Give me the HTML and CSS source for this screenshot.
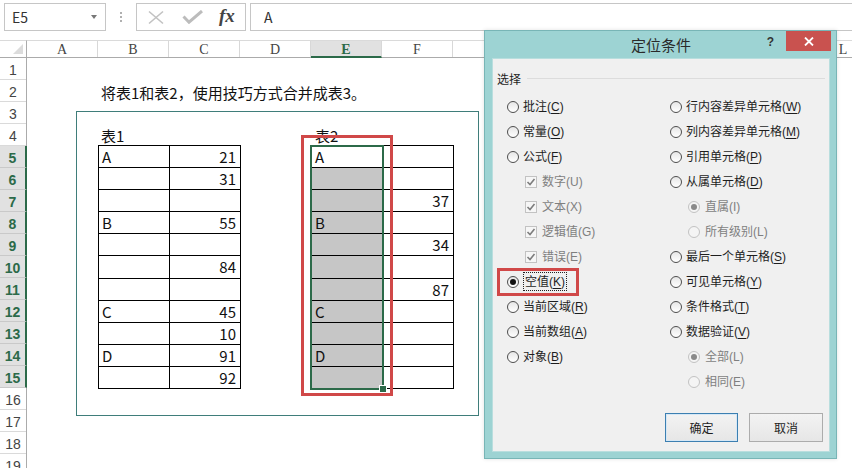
FILE: index.html
```html
<!DOCTYPE html>
<html lang="zh-CN">
<head>
    <meta charset="UTF-8">
    <title>定位条件</title>
    <link rel="stylesheet" href="styles.css">
</head>
<body>
    <!-- Formula bar -->
    <div class="formula-bar">
        <div class="name-box">E5<span class="arrow"></span></div>
        <div class="grip"><i></i><i></i><i></i></div>
        <div class="fx-box">
            <svg class="ico-x" width="18" height="15" viewBox="0 0 18 15"><path d="M2 1.5 L16 13.5 M16 1.5 L2 13.5" stroke="#c2c2c2" stroke-width="1.6" fill="none"/></svg>
            <svg class="ico-ok" width="22" height="14" viewBox="0 0 22 14"><path d="M1.5 6.5 L7 12.2 L20 1" stroke="#bcbcbc" stroke-width="3" fill="none"/></svg>
            <span class="fx">fx</span>
        </div>
        <div class="formula-input">A</div>
    </div>

    <!-- Sheet -->
    <div class="sheet">
        <div class="corner"><span></span></div>
        <div class="col-heads">
            <div>A</div><div>B</div><div>C</div><div>D</div><div class="active">E</div><div>F</div>
            <!-- G to K sit under the dialog -->
            <div></div><div></div><div></div><div></div><div></div><div>L</div>
        </div>
        <div class="row-heads">
            <div>1</div><div>2</div><div>3</div><div>4</div>
            <div class="active">5</div><div class="active">6</div><div class="active">7</div><div class="active">8</div>
            <div class="active">9</div><div class="active">10</div><div class="active">11</div><div class="active">12</div>
            <div class="active">13</div><div class="active">14</div><div class="active">15</div>
            <div>16</div><div>17</div><div>18</div><div>19</div>
        </div>
        <div class="cells">
            <div class="note">将表1和表2，使用技巧方式合并成表3。</div>
            <div class="label t1-label">表1</div>
            <div class="label t2-label">表2</div>

            <div class="tbl tbl1">
                <div>A</div><div class="num">21</div>
                <div></div><div class="num">31</div>
                <div></div><div></div>
                <div>B</div><div class="num">55</div>
                <div></div><div></div>
                <div></div><div class="num">84</div>
                <div></div><div></div>
                <div>C</div><div class="num">45</div>
                <div></div><div class="num">10</div>
                <div>D</div><div class="num">91</div>
                <div></div><div class="num">92</div>
            </div>

            <div class="tbl tbl2">
                <div>A</div><div></div>
                <div class="sel"></div><div></div>
                <div class="sel"></div><div class="num">37</div>
                <div class="sel">B</div><div></div>
                <div class="sel"></div><div class="num">34</div>
                <div class="sel"></div><div></div>
                <div class="sel"></div><div class="num">87</div>
                <div class="sel">C</div><div></div>
                <div class="sel"></div><div></div>
                <div class="sel">D</div><div></div>
                <div class="sel"></div><div></div>
            </div>

            <div class="frame"></div>
            <div class="selection"></div>
            <div class="fill-handle"></div>
            <div class="mark mark-col"></div>
        </div>
    </div>

    <!-- Go To Special dialog -->
    <div class="dialog">
        <div class="title-bar">
            <span class="title">定位条件</span>
            <span class="help">?</span>
            <span class="close"><svg width="10" height="9" viewBox="0 0 10 9"><path d="M1 0.5 L9 8.5 M9 0.5 L1 8.5" stroke="#fff" stroke-width="1.8"/></svg></span>
        </div>
        <div class="content">
            <div class="group-head"><span>选择</span><i></i></div>
            <div class="options">
                <div class="opt"><span class="radio"></span><span>批注<span class="key">(<u>C</u>)</span></span></div>
                <div class="opt"><span class="radio"></span><span>行内容差异单元格<span class="key">(<u>W</u>)</span></span></div>

                <div class="opt"><span class="radio"></span><span>常量<span class="key">(<u>O</u>)</span></span></div>
                <div class="opt"><span class="radio"></span><span>列内容差异单元格<span class="key">(<u>M</u>)</span></span></div>

                <div class="opt"><span class="radio"></span><span>公式<span class="key">(<u>F</u>)</span></span></div>
                <div class="opt"><span class="radio"></span><span>引用单元格<span class="key">(<u>P</u>)</span></span></div>

                <div class="opt sub off"><span class="check"><svg width="10" height="10" viewBox="0 0 10 10"><path d="M1.5 5 L4 7.5 L8.5 2" stroke="#7d7d7d" stroke-width="1.6" fill="none"/></svg></span><span>数字<span class="key">(U)</span></span></div>
                <div class="opt"><span class="radio"></span><span>从属单元格<span class="key">(<u>D</u>)</span></span></div>

                <div class="opt sub off"><span class="check"><svg width="10" height="10" viewBox="0 0 10 10"><path d="M1.5 5 L4 7.5 L8.5 2" stroke="#7d7d7d" stroke-width="1.6" fill="none"/></svg></span><span>文本<span class="key">(X)</span></span></div>
                <div class="opt sub off"><span class="radio on"></span><span>直属<span class="key">(I)</span></span></div>

                <div class="opt sub off"><span class="check"><svg width="10" height="10" viewBox="0 0 10 10"><path d="M1.5 5 L4 7.5 L8.5 2" stroke="#7d7d7d" stroke-width="1.6" fill="none"/></svg></span><span>逻辑值<span class="key">(G)</span></span></div>
                <div class="opt sub off"><span class="radio"></span><span>所有级别<span class="key">(L)</span></span></div>

                <div class="opt sub off"><span class="check"><svg width="10" height="10" viewBox="0 0 10 10"><path d="M1.5 5 L4 7.5 L8.5 2" stroke="#7d7d7d" stroke-width="1.6" fill="none"/></svg></span><span>错误<span class="key">(E)</span></span></div>
                <div class="opt"><span class="radio"></span><span>最后一个单元格<span class="key">(<u>S</u>)</span></span></div>

                <div class="opt"><span class="radio on"></span><span class="focus">空值<span class="key">(<u>K</u>)</span></span></div>
                <div class="opt"><span class="radio"></span><span>可见单元格<span class="key">(<u>Y</u>)</span></span></div>

                <div class="opt"><span class="radio"></span><span>当前区域<span class="key">(<u>R</u>)</span></span></div>
                <div class="opt"><span class="radio"></span><span>条件格式<span class="key">(<u>T</u>)</span></span></div>

                <div class="opt"><span class="radio"></span><span>当前数组<span class="key">(<u>A</u>)</span></span></div>
                <div class="opt"><span class="radio"></span><span>数据验证<span class="key">(<u>V</u>)</span></span></div>

                <div class="opt"><span class="radio"></span><span>对象<span class="key">(<u>B</u>)</span></span></div>
                <div class="opt sub off"><span class="radio on"></span><span>全部<span class="key">(L)</span></span></div>

                <div class="opt"></div>
                <div class="opt sub off"><span class="radio"></span><span>相同<span class="key">(E)</span></span></div>
            </div>
            <div class="buttons">
                <button class="default">确定</button>
                <button>取消</button>
            </div>
            <div class="mark mark-opt"></div>
        </div>
    </div>
</body>
</html>
```

FILE: styles.css
```css
body {
    margin: 0;
    width: 852px;
    height: 468px;
    overflow: hidden;
    position: relative;
    background: #fff;
    font-family: "Noto Sans CJK SC", "Liberation Sans", sans-serif;
    color: #222;
}

/* formula bar */
.formula-bar {
    height: 40px;
    display: flex;
    align-items: flex-start;
    padding-top: 3px;
    box-sizing: border-box;
}
.name-box {
    margin-left: 4px;
    width: 102px;
    height: 28px;
    box-sizing: border-box;
    border: 1px solid #c6c6c6;
    padding-left: 7px;
    font-size: 14px;
    line-height: 26px;
    color: #333;
    position: relative;
}
.name-box .arrow {
    position: absolute;
    right: 8px;
    top: 11px;
    border-left: 3.5px solid transparent;
    border-right: 3.5px solid transparent;
    border-top: 4px solid #777;
}
.grip {
    width: 30px;
    height: 28px;
    display: flex;
    flex-direction: column;
    align-items: center;
    justify-content: center;
    gap: 2px;
}
.grip i {
    width: 2px;
    height: 2px;
    background: #b0b0b0;
}
.fx-box {
    width: 110px;
    height: 28px;
    box-sizing: border-box;
    border: 1px solid #c6c6c6;
    display: flex;
    align-items: center;
    padding-left: 10px;
}
.ico-x { margin-right: 17px; }
.ico-ok { margin-right: 15px; }
.fx {
    font-family: "Liberation Serif", serif;
    font-style: italic;
    font-weight: bold;
    font-size: 19px;
    color: #444;
    line-height: 20px;
    margin-top: -2px;
}
.formula-input {
    flex: 1;
    margin-left: 4px;
    height: 28px;
    box-sizing: border-box;
    border: 1px solid #c6c6c6;
    border-right: none;
    padding-left: 13px;
    font-size: 14px;
    line-height: 26px;
    color: #333;
}

/* sheet */
.sheet {
    display: grid;
    grid-template-columns: 27px 1fr;
    grid-template-rows: 18px 1fr;
}
.corner {
    border-right: 1px solid #ababab;
    border-bottom: 1px solid #ababab;
    border-top: 1px solid #dadada;
    box-sizing: border-box;
    position: relative;
}
.corner span {
    position: absolute;
    right: 3px;
    bottom: 3px;
    border-left: 10px solid transparent;
    border-bottom: 10px solid #dcdcdc;
}
.col-heads {
    display: flex;
    border-top: 1px solid #dadada;
    border-bottom: 1px solid #ababab;
    box-sizing: border-box;
}
.col-heads div {
    flex: none;
    width: 71px;
    box-sizing: border-box;
    border-right: 1px solid #d8d8d8;
    text-align: center;
    font-family: "Liberation Serif", serif;
    font-size: 14px;
    line-height: 18px;
    color: #444;
}
.col-heads div.active {
    background: #e1e1e1;
    color: #2c6a49;
    font-weight: bold;
    border-bottom: 2px solid #2c6a49;
    margin-bottom: -1px;
}
.row-heads {
    display: flex;
    flex-direction: column;
    border-right: 1px solid #ababab;
}
.row-heads div {
    flex: none;
    height: 22px;
    box-sizing: border-box;
    border-bottom: 1px solid #dadada;
    display: flex;
    align-items: flex-end;
    justify-content: center;
    font-family: "Liberation Sans", sans-serif;
    font-size: 14px;
    line-height: 18px;
    color: #444;
}
.row-heads div.active {
    background: #e1e1e1;
    color: #2c6a49;
    font-weight: bold;
    border-bottom-color: #c9c9c9;
    border-right: 2px solid #2c6a49;
    margin-right: -1px;
}

.cells {
    display: grid;
    grid-template-columns: repeat(12, 71px);
    grid-template-rows: repeat(19, 22px);
    position: relative;
    font-size: 15px;
    color: #111;
}
.note {
    grid-column: 2 / span 6;
    grid-row: 2;
    white-space: nowrap;
    padding: 3px 0 0 3px;
    line-height: 20px;
}
.label {
    grid-row: 4;
    padding: 2px 0 0 3px;
    line-height: 20px;
}
.t1-label { grid-column: 2; }
.t2-label { grid-column: 5; padding-left: 4px; }

.tbl {
    grid-row: 5 / span 11;
    display: grid;
    grid-template-columns: 1fr 1fr;
    grid-template-rows: repeat(11, 1fr);
    border-left: 1px solid #000;
    border-top: 1px solid #000;
    margin: -1px -1px -1px 0;
}
.tbl1 { grid-column: 2 / span 2; }
.tbl2 { grid-column: 5 / span 2; }
.tbl div {
    border-right: 1px solid #000;
    border-bottom: 1px solid #000;
    padding: 1px 0 0 3px;
    line-height: 20px;
}
.tbl div.num {
    text-align: right;
    padding-right: 4px;
}
.tbl div.sel {
    background: #c6c6c6;
}

/* overlays on the sheet */
.frame {
    position: absolute;
    left: 49px;
    top: 53px;
    width: 403px;
    height: 305px;
    box-sizing: border-box;
    border: 1px solid #3f7d7a;
    pointer-events: none;
}
.selection {
    position: absolute;
    left: 283px;
    top: 87px;
    width: 74px;
    height: 245px;
    box-sizing: border-box;
    border: 2px solid #2c6a49;
}
.fill-handle {
    position: absolute;
    left: 352px;
    top: 327px;
    width: 6px;
    height: 6px;
    background: #2c6a49;
    border: 1px solid #fff;
}
.mark {
    position: absolute;
    box-sizing: border-box;
    border: 3px solid #d04848;
}
.mark-col {
    left: 274px;
    top: 77px;
    width: 92px;
    height: 261px;
}

/* dialog */
.dialog {
    position: absolute;
    left: 484px;
    top: 30px;
    width: 353px;
    height: 429px;
    box-sizing: border-box;
    background: #9dd3d3;
    border: 1px solid #78b5b6;
    padding: 0 6px 6px 7px;
    display: flex;
    flex-direction: column;
    box-shadow: 0 0 4px rgba(0, 0, 0, 0.12);
}
.title-bar {
    height: 27px;
    flex: none;
    display: flex;
    align-items: center;
    justify-content: center;
    font-size: 15px;
    color: #2a2a2a;
    position: relative;
}
.help {
    position: absolute;
    right: 56px;
    top: 4px;
    font-family: "Liberation Sans", sans-serif;
    font-weight: bold;
    font-size: 12px;
    line-height: 14px;
    color: #333;
}
.close {
    position: absolute;
    right: -1px;
    top: 0;
    width: 45px;
    height: 20px;
    background: #c9524f;
    display: flex;
    align-items: center;
    justify-content: center;
}
.content {
    flex: 1;
    background: #f0f0f0;
    border: 1px solid #b9dede;
    position: relative;
    font-size: 12px;
    color: #1e1e1e;
}
.group-head {
    height: 22px;
    margin-top: 8px;
    padding: 0 4px;
    display: flex;
    align-items: center;
    gap: 6px;
}
.group-head i {
    flex: 1;
    height: 1px;
    background: #dcdcdc;
}
.options {
    margin-top: 5px;
    padding-left: 14px;
    display: grid;
    grid-template-columns: 163px 1fr;
    grid-auto-rows: 25px;
}
.opt {
    display: flex;
    align-items: center;
    white-space: nowrap;
    line-height: 16px;
}
.key {
    font-family: "Liberation Sans", sans-serif;
    font-size: 12px;
}
.key u { text-decoration-thickness: 1px; text-underline-offset: 2px; }
.opt.sub { padding-left: 18px; }
.opt.off { color: #7f7f7f; }
.radio {
    flex: none;
    width: 12px;
    height: 12px;
    margin-right: 4px;
    box-sizing: border-box;
    border: 1px solid #4d4d4d;
    border-radius: 50%;
    background: linear-gradient(#e6e6e6, #fff);
    position: relative;
}
.sub .radio { margin-right: 5px; }
.radio.on::after {
    content: "";
    position: absolute;
    left: 2px;
    top: 2px;
    width: 6px;
    height: 6px;
    border-radius: 50%;
    background: #111;
}
.off .radio {
    border-color: #c2c2c2;
    background: #f4f4f4;
}
.off .radio.on::after { background: #8a8a8a; }
.check {
    flex: none;
    width: 12px;
    height: 12px;
    margin-right: 5px;
    box-sizing: border-box;
    border: 1px solid #c2c2c2;
    background: #f6f6f6;
    display: flex;
    align-items: center;
    justify-content: center;
}
.focus {
    border: 1px dotted #222;
    padding: 0 1px;
}
.buttons {
    margin-top: 19px;
    padding-right: 6px;
    display: flex;
    justify-content: flex-end;
    gap: 11px;
}
.buttons button {
    width: 74px;
    height: 29px;
    box-sizing: border-box;
    border: 1px solid #acacac;
    background: linear-gradient(#f3f3f3, #e6e6e6);
    font-family: "Noto Sans CJK SC", sans-serif;
    font-size: 12px;
    color: #1e1e1e;
    padding: 0;
}
.buttons button.default {
    width: 73px;
    border-color: #3c7fb1;
    box-shadow: inset 0 0 0 1px #d6e8f6;
}
.mark-opt {
    left: 4px;
    top: 209px;
    width: 82px;
    height: 28px;
}
```
